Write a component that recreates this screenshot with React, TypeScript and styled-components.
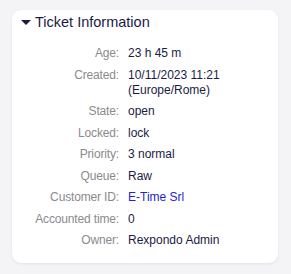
import React from 'react';
import styled, { createGlobalStyle } from 'styled-components';

const Global = createGlobalStyle`
  html, body {
    margin: 0;
    padding: 0;
    background: #f4f4f6;
    font-family: "Liberation Sans", Arial, sans-serif;
  }
`;

const Page = styled.div`
  padding: 10px 13px 12px 12px;
`;

const Card = styled.section`
  background: #fff;
  border-radius: 9px;
  box-shadow: 0 1px 3px rgba(20, 20, 60, 0.08);
  padding: 3px 12px 15px 9px;
`;

const Header = styled.h2`
  display: flex;
  align-items: center;
  gap: 4px;
  margin: 0;
  font-size: 14.5px;
  font-weight: normal;
  line-height: 18px;
  color: #1b1b45;
`;

const Caret = styled.span`
  width: 0;
  height: 0;
  border-left: 5px solid transparent;
  border-right: 5px solid transparent;
  border-top: 5px solid #1b1b45;
  margin: 1px 0 0 0;
`;

const Rows = styled.dl`
  display: grid;
  grid-template-columns: 98px 1fr;
  column-gap: 9px;
  row-gap: 6.5px;
  margin: 15px 0 0;
  font-size: 12px;
  line-height: 15px;
`;

const Label = styled.dt`
  text-align: right;
  color: #8a8a8e;
  white-space: nowrap;
  letter-spacing: -0.15px;
`;

const Value = styled.dd<{ $link?: boolean }>`
  margin: 0;
  color: ${(p) => (p.$link ? '#2323d6' : '#1b1b45')};
`;

const fields: { label: string; value: React.ReactNode; link?: boolean }[] = [
  { label: 'Age', value: '23 h 45 m' },
  { label: 'Created', value: <>10/11/2023 11:21<br />(Europe/Rome)</> },
  { label: 'State', value: 'open' },
  { label: 'Locked', value: 'lock' },
  { label: 'Priority', value: '3 normal' },
  { label: 'Queue', value: 'Raw' },
  { label: 'Customer ID', value: 'E-Time Srl', link: true },
  { label: 'Accounted time', value: '0' },
  { label: 'Owner', value: 'Rexpondo Admin' },
];

export default function App() {
  return (
    <>
      <Global />
      <Page>
        <Card>
          <Header>
            <Caret />
            Ticket Information
          </Header>
          <Rows>
            {fields.map((f) => (
              <React.Fragment key={f.label}>
                <Label>{f.label}:</Label>
                <Value $link={f.link}>{f.value}</Value>
              </React.Fragment>
            ))}
          </Rows>
        </Card>
      </Page>
    </>
  );
}
